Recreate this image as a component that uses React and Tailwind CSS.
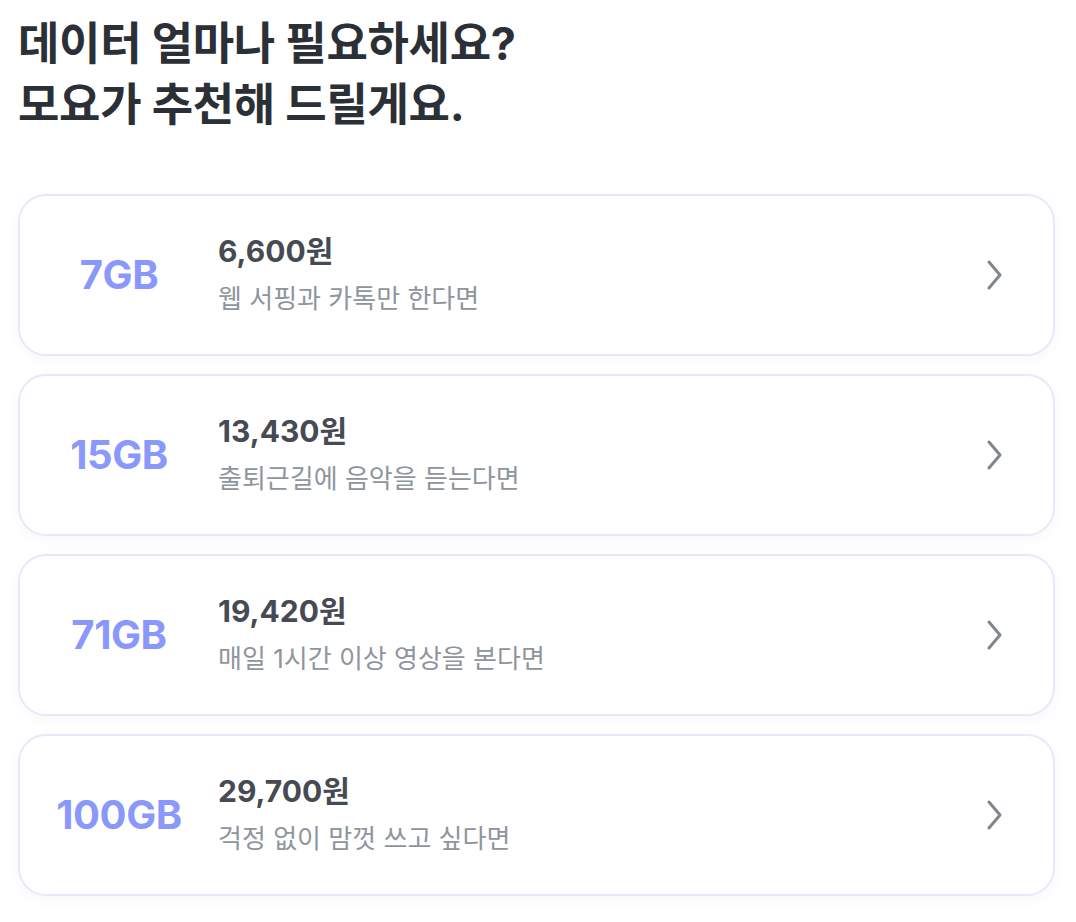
import React from 'react';

const plans = [
    { gb: '7GB', price: '6,600원', desc: '웹 서핑과 카톡만 한다면' },
    { gb: '15GB', price: '13,430원', desc: '출퇴근길에 음악을 듣는다면' },
    { gb: '71GB', price: '19,420원', desc: '매일 1시간 이상 영상을 본다면' },
    { gb: '100GB', price: '29,700원', desc: '걱정 없이 맘껏 쓰고 싶다면' },
];

const Chevron = () => (
    <svg width="22" height="32" viewBox="0 0 22 32" fill="none">
        <path d="M5 3 L16 16 L5 29" stroke="#80868e" strokeWidth="3" strokeLinecap="round" strokeLinejoin="round" />
    </svg>
);

const App = () => {
    return (
        <div className="min-h-[922px] bg-white px-[18px] pt-[13px] font-['Inter','Noto_Sans_CJK_KR',sans-serif]">
            {/* Title */}
            <h1 className="text-[45px] leading-[61px] font-bold text-[#2b2f36] tracking-[-0.3px]">
                데이터 얼마나 필요하세요?<br />
                모요가 추천해 드릴게요.
            </h1>

            {/* Plan list */}
            <div className="mt-[59px] flex flex-col gap-[18px] w-[1037px]">
                {plans.map((p) => (
                    <div
                        key={p.gb}
                        className="flex items-center h-[162px] bg-white border-2 border-[#e5e9fb] rounded-[28px] shadow-[0_4px_16px_rgba(0,0,0,0.03)]"
                    >
                        <div className="w-[198px] text-center text-[40px] font-bold text-[#8b98fb] tracking-[-0.4px]">
                            {p.gb}
                        </div>
                        <div className="flex-1 flex flex-col gap-[12px] -mt-[2px]">
                            <div className="text-[30px] leading-[38px] font-bold text-[#464a52]">{p.price}</div>
                            <div className="text-[26px] leading-[34px] text-[#8f959d]">{p.desc}</div>
                        </div>
                        <div className="pr-[47px]">
                            <Chevron />
                        </div>
                    </div>
                ))}
            </div>
        </div>
    );
};

export default App;
